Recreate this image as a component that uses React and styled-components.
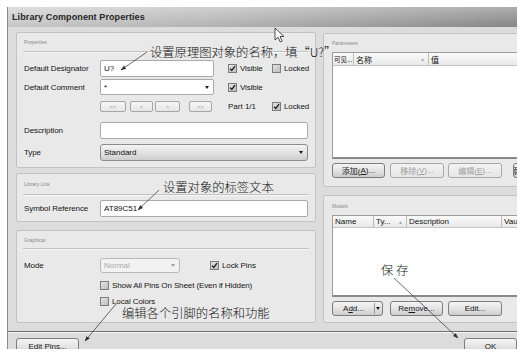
import React from 'react';
import styled, { createGlobalStyle } from 'styled-components';

const Global = createGlobalStyle`
  html, body { margin: 0; padding: 0; background: #fff; }
  body { font-family: "Liberation Sans", Arial, sans-serif; }
  * { box-sizing: border-box; }
`;

const Page = styled.div`
  position: relative;
  width: 530px;
  height: 358px;
  background: #fff;
  padding: 7px 0 0 7px;
  overflow: hidden;
`;

const Dialog = styled.div`
  width: 510px;
  height: 342px;
  background: #dcdcdc;
  border-left: 1px solid #8a8a8a;
  overflow: hidden;
  display: flex;
  flex-direction: column;
`;

const TitleBar = styled.div`
  height: 20px;
  flex: none;
  background: linear-gradient(to bottom, rgba(255,255,255,0.28), rgba(0,0,0,0.06)),
    linear-gradient(to right, #d2d2d2 0%, #bdbdbd 40%, #8e8e8e 100%);
  display: flex;
  align-items: center;
  padding-left: 4px;
  font-size: 9px;
  font-weight: bold;
  color: #262626;
  letter-spacing: 0.1px;
`;

const Body = styled.div`
  display: flex;
  gap: 7px;
  padding: 5px 0 0 8px;
  flex: none;
`;

const Column = styled.div`
  display: flex;
  flex-direction: column;
  width: ${p => p.$w}px;
  flex: none;
`;

const GroupBox = styled.div`
  background: #e9e9e9;
  border: 1px solid #c2c2c2;
  border-radius: 2px;
  height: ${p => p.$h}px;
  margin-top: ${p => p.$mt || 0}px;
  padding: 0 ${p => p.$px ?? 7}px;
  display: flex;
  flex-direction: column;
`;

const GroupHeader = styled.div`
  height: ${p => p.$h}px;
  flex: none;
  display: flex;
  align-items: center;
  font-size: 5px;
  color: #8a8a8a;
  padding-left: 1px;
  border-bottom: ${p => (p.$line ? '1px solid #c2c2c2' : 'none')};
  box-shadow: ${p => (p.$line ? '0 1px 0 #f6f6f6' : 'none')};
  margin: 0 -1px;
`;

const Row = styled.div`
  display: flex;
  align-items: center;
  height: ${p => p.$h}px;
  margin-top: ${p => p.$mt || 0}px;
  flex: none;
`;

const Label = styled.div`
  width: 76px;
  flex: none;
  font-size: 8px;
  color: #151515;
  letter-spacing: -0.1px;
`;

const TextField = styled.div`
  width: ${p => p.$w}px;
  height: 100%;
  flex: none;
  background: #fff;
  border: 1px solid #a9a9a9;
  border-radius: 2px;
  font-size: 8px;
  color: #111;
  padding: 0 3px;
  display: flex;
  align-items: center;
  justify-content: space-between;
`;

const Combo = styled.div`
  width: ${p => p.$w}px;
  height: 100%;
  flex: none;
  border-radius: 3px;
  font-size: 8px;
  padding: 0 3px;
  display: flex;
  align-items: center;
  justify-content: space-between;
  color: ${p => (p.$disabled ? '#a8a8a8' : '#111')};
  border: 1px solid ${p => (p.$disabled ? '#b8b8b8' : '#8c8c8c')};
  background: ${p =>
    p.$disabled
      ? '#f2f2f2'
      : 'linear-gradient(to bottom, #f4f4f4 0%, #e2e2e2 50%, #cfcfcf 100%)'};
`;

const Arrow = styled.span`
  width: 0;
  height: 0;
  border-left: 2.5px solid transparent;
  border-right: 2.5px solid transparent;
  border-top: 3px solid ${p => (p.$disabled ? '#a0a0a0' : '#1a1a1a')};
  margin-right: 1px;
`;

const CheckItem = styled.div`
  width: ${p => (p.$w ? `${p.$w}px` : 'auto')};
  margin-left: ${p => p.$ml || 0}px;
  flex: none;
  display: flex;
  align-items: center;
  gap: 3px;
  font-size: 8px;
  color: #151515;
  letter-spacing: -0.1px;
  white-space: nowrap;
`;

const Box = styled.span`
  width: 9px;
  height: 9px;
  flex: none;
  border: 1px solid #7c7c7c;
  background: linear-gradient(to bottom right, #e4e4e4, #bdbdbd);
  display: flex;
  align-items: center;
  justify-content: center;
`;

const NavButton = styled.div`
  width: ${p => p.$w}px;
  height: 100%;
  margin-left: ${p => p.$ml || 0}px;
  flex: none;
  border: 1px solid #a6a6a6;
  border-radius: 2px;
  background: linear-gradient(to bottom, #f6f6f6, #e6e6e6);
  font-size: 6px;
  color: #9a9a9a;
  display: flex;
  align-items: center;
  justify-content: center;
`;

const Text = styled.div`
  width: ${p => (p.$w ? `${p.$w}px` : 'auto')};
  margin-left: ${p => p.$ml || 0}px;
  flex: none;
  font-size: 8px;
  color: #151515;
`;

const Table = styled.div`
  height: ${p => p.$h}px;
  flex: none;
  background: #fff;
  border: 1px solid #9c9c9c;
  border-bottom: 2px solid #8a8a8a;
  margin-right: -60px;
  display: flex;
  flex-direction: column;
`;

const TableHead = styled.div`
  height: ${p => p.$h}px;
  flex: none;
  display: flex;
  background: linear-gradient(to bottom, #fafafa, #e9e9e9);
  border-bottom: 1px solid #c6c6c6;
`;

const HeadCell = styled.div`
  width: ${p => p.$w}px;
  flex: none;
  display: flex;
  align-items: center;
  justify-content: space-between;
  padding: 0 ${p => (p.$tight ? 0 : 3)}px 0 ${p => (p.$tight ? 1 : 2)}px;
  border-right: 1px solid #bdbdbd;
  font-size: ${p => p.$fs || 8}px;
  color: #111;
  font-family: "Liberation Sans", "Noto Sans CJK SC", sans-serif;
  white-space: nowrap;
  overflow: hidden;
`;

const SortMark = styled.span`
  font-size: 5px;
  color: #aaa;
`;

const ButtonRow = styled.div`
  display: flex;
  align-items: center;
  margin-top: ${p => p.$mt}px;
  height: 15px;
  flex: none;
`;

const Button = styled.div`
  width: ${p => p.$w}px;
  height: ${p => p.$h || 15}px;
  margin-left: ${p => p.$ml || 0}px;
  flex: none;
  border: 1px solid ${p => (p.$disabled ? '#a9a9a9' : '#7d7d7d')};
  border-radius: 3px;
  background: ${p =>
    p.$disabled
      ? 'linear-gradient(to bottom, #f3f3f3, #e6e6e6)'
      : 'linear-gradient(to bottom, #f4f4f4 0%, #e4e4e4 50%, #cdcdcd 100%)'};
  font-family: "Liberation Sans", "Noto Sans CJK SC", sans-serif;
  font-size: 8px;
  color: ${p => (p.$disabled ? '#9d9d9d' : '#151515')};
  display: flex;
  align-items: center;
  justify-content: center;
  white-space: nowrap;
  overflow: hidden;
  & u { text-underline-offset: 1px; }
`;

const FooterButton = styled(Button)`
  margin-left: ${p => (p.$end ? 'auto' : '0')};
`;

const SplitButton = styled(Button)`
  justify-content: flex-start;
  padding-left: 0;
`;

const SplitMain = styled.span`
  width: 42px;
  text-align: center;
  border-right: 1px solid #9a9a9a;
  line-height: 11px;
`;

const SplitArrow = styled.span`
  flex: 1;
  display: flex;
  justify-content: center;
`;

const Separator = styled.div`
  margin-top: 8px;
  height: 2px;
  flex: none;
  border-top: 1px solid #6e6e6e;
  border-bottom: 1px solid #f8f8f8;
`;

const Footer = styled.div`
  display: flex;
  align-items: flex-start;
  padding-left: 8px;
  margin-top: 5px;
`;

const Overlay = styled.svg`
  position: absolute;
  left: 0;
  top: 0;
  pointer-events: none;
`;

const Note = styled.div`
  position: absolute;
  left: ${p => p.$x}px;
  top: ${p => p.$y}px;
  font-family: "Noto Sans CJK SC", sans-serif;
  font-weight: 300;
  font-size: 12.3px;
  line-height: 14px;
  letter-spacing: ${p => p.$ls || 0}px;
  color: #141414;
  white-space: nowrap;
`;

const Check = ({ on }) => (
  <Box>
    {on && (
      <svg width="7" height="7" viewBox="0 0 7 7">
        <path d="M1 3.6 L2.8 5.5 L6 1.2" fill="none" stroke="#1d1d1d" strokeWidth="1.3" />
      </svg>
    )}
  </Box>
);

export default function App() {
  return (
    <Page>
      <Global />
      <Dialog>
        <TitleBar>Library Component Properties</TitleBar>
        <Body>
          <Column $w={300}>
            <GroupBox $h={136}>
              <GroupHeader $h={19} $line>Properties</GroupHeader>
              <Row $mt={8} $h={17}>
                <Label>Default Designator</Label>
                <TextField $w={114}>U?</TextField>
                <CheckItem $ml={14} $w={44}><Check on />Visible</CheckItem>
                <CheckItem><Check />Locked</CheckItem>
              </Row>
              <Row $mt={2} $h={16}>
                <Label>Default Comment</Label>
                <TextField $w={114}>*<Arrow /></TextField>
                <CheckItem $ml={14}><Check on />Visible</CheckItem>
              </Row>
              <Row $mt={6} $h={11}>
                <Label />
                <NavButton $w={26}>&lt;&lt;</NavButton>
                <NavButton $w={23} $ml={4}>&lt;</NavButton>
                <NavButton $w={25} $ml={2}>&gt;</NavButton>
                <NavButton $w={23} $ml={9}>&gt;&gt;</NavButton>
                <Text $ml={16} $w={44}>Part 1/1</Text>
                <CheckItem><Check on />Locked</CheckItem>
              </Row>
              <Row $mt={10} $h={17}>
                <Label>Description</Label>
                <TextField $w={208} />
              </Row>
              <Row $mt={5} $h={17}>
                <Label>Type</Label>
                <Combo $w={208}>Standard<Arrow /></Combo>
              </Row>
            </GroupBox>

            <GroupBox $h={49} $mt={5}>
              <GroupHeader $h={21} $line>Library Link</GroupHeader>
              <Row $mt={5} $h={17}>
                <Label>Symbol Reference</Label>
                <TextField $w={208}>AT89C51</TextField>
              </Row>
            </GroupBox>

            <GroupBox $h={93} $mt={8}>
              <GroupHeader $h={18} $line>Graphical</GroupHeader>
              <Row $mt={9} $h={15}>
                <Label>Mode</Label>
                <Combo $w={80} $disabled>Normal<Arrow $disabled /></Combo>
                <CheckItem $ml={30}><Check on />Lock Pins</CheckItem>
              </Row>
              <Row $mt={5} $h={14}>
                <Label />
                <CheckItem><Check />Show All Pins On Sheet (Even if Hidden)</CheckItem>
              </Row>
              <Row $mt={2} $h={14}>
                <Label />
                <CheckItem><Check />Local Colors</CheckItem>
              </Row>
            </GroupBox>
          </Column>

          <Column $w={240}>
            <GroupBox $h={154} $mt={1} $px={8}>
              <GroupHeader $h={18}>Parameters</GroupHeader>
              <Table $h={107}>
                <TableHead $h={13}>
                  <HeadCell $w={21} $fs={6.5} $tight>可见...</HeadCell>
                  <HeadCell $w={75}>名称<SortMark>▲</SortMark></HeadCell>
                  <HeadCell $w={140}>值</HeadCell>
                </TableHead>
              </Table>
              <ButtonRow $mt={4}>
                <Button $w={53}>添加(<u>A</u>)...</Button>
                <Button $w={54} $ml={5} $disabled>移除(<u>V</u>)...</Button>
                <Button $w={54} $ml={4} $disabled>编辑(<u>E</u>)...</Button>
                <Button $w={54} $ml={11}>添加为规则(<u>R</u>)...</Button>
              </ButtonRow>
            </GroupBox>

            <GroupBox $h={128} $mt={8} $px={8}>
              <GroupHeader $h={19}>Models</GroupHeader>
              <Table $h={82}>
                <TableHead $h={12}>
                  <HeadCell $w={41}>Name</HeadCell>
                  <HeadCell $w={33}>Ty...<SortMark>▲</SortMark></HeadCell>
                  <HeadCell $w={95}>Description</HeadCell>
                  <HeadCell $w={60}>Vault</HeadCell>
                </TableHead>
              </Table>
              <ButtonRow $mt={4}>
                <SplitButton $w={51}>
                  <SplitMain>A<u>d</u>d...</SplitMain>
                  <SplitArrow><Arrow /></SplitArrow>
                </SplitButton>
                <Button $w={53} $ml={7}>Re<u>m</u>ove...</Button>
                <Button $w={54} $ml={5}>Edit...</Button>
              </ButtonRow>
            </GroupBox>
          </Column>
        </Body>
        <Separator />
        <Footer>
          <FooterButton $w={63} $h={17}>Edit Pins...</FooterButton>
          <FooterButton $w={53} $h={17} $end>OK</FooterButton>
        </Footer>
      </Dialog>

      <Note $x={150} $y={45}>设置原理图对象的名称，填“U?”</Note>
      <Note $x={163} $y={180}>设置对象的标签文本</Note>
      <Note $x={122} $y={306}>编辑各个引脚的名称和功能</Note>
      <Note $x={381} $y={263} $ls={3}>保存</Note>

      <Overlay width="530" height="358" viewBox="0 0 530 358">
        <defs>
          <marker id="ah" viewBox="0 0 10 10" refX="9" refY="5" markerWidth="7" markerHeight="7" orient="auto">
            <path d="M0 1.5 L10 5 L0 8.5 Z" fill="#333" />
          </marker>
        </defs>
        <g stroke="#444" strokeWidth="0.8" fill="none">
          <line x1="147" y1="52" x2="121" y2="70" markerEnd="url(#ah)" />
          <line x1="159" y1="190" x2="138" y2="210" markerEnd="url(#ah)" />
          <line x1="116" y1="304" x2="85" y2="341" markerEnd="url(#ah)" />
          <line x1="394" y1="278" x2="458" y2="338" markerEnd="url(#ah)" />
        </g>
        <path
          d="M275 28 L275 40 L278 37.2 L280.3 42 L282.2 41.1 L280 36.5 L284 36.5 Z"
          fill="#fff"
          stroke="#222"
          strokeWidth="0.8"
        />
      </Overlay>
    </Page>
  );
}
